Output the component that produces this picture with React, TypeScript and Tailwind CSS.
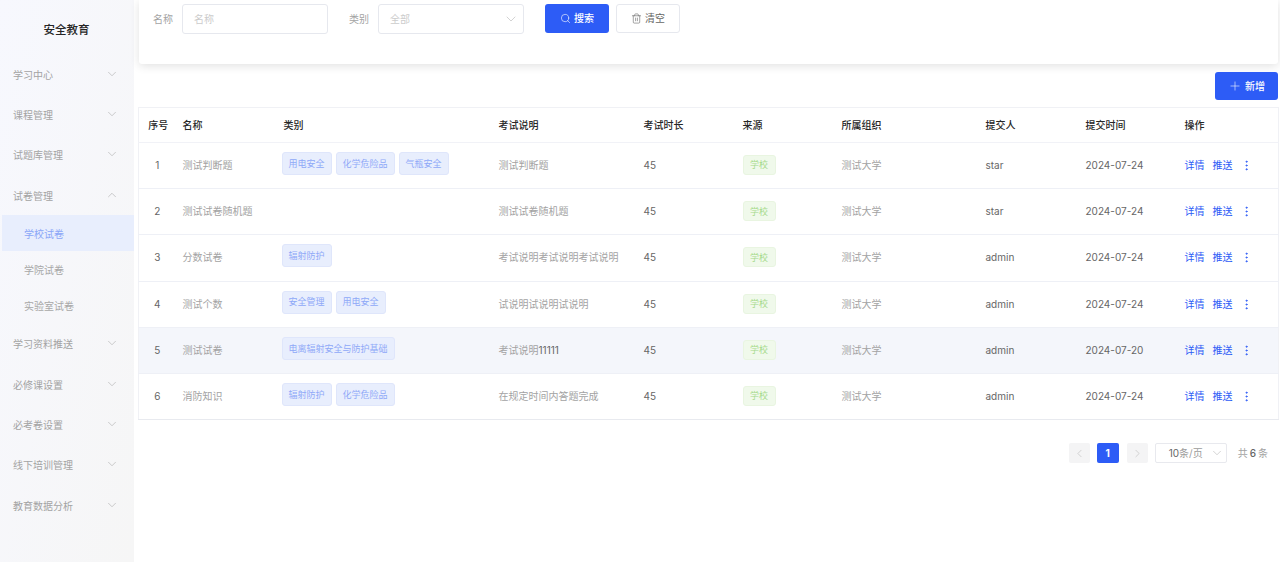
import { ChevronDown, ChevronUp, ChevronLeft, ChevronRight, Search, Trash2, Plus, EllipsisVertical } from "lucide-react";

const rows = [
  { id: 1, name: "测试判断题", tags: ["用电安全", "化学危险品", "气瓶安全"], desc: "测试判断题", user: "star", date: "2024-07-24" },
  { id: 2, name: "测试试卷随机题", tags: [], desc: "测试试卷随机题", user: "star", date: "2024-07-24" },
  { id: 3, name: "分数试卷", tags: ["辐射防护"], desc: "考试说明考试说明考试说明", user: "admin", date: "2024-07-24" },
  { id: 4, name: "测试个数", tags: ["安全管理", "用电安全"], desc: "试说明试说明试说明", user: "admin", date: "2024-07-24" },
  { id: 5, name: "测试试卷", tags: ["电离辐射安全与防护基础"], desc: "考试说明11111", user: "admin", date: "2024-07-20" },
  { id: 6, name: "消防知识", tags: ["辐射防护", "化学危险品"], desc: "在规定时间内答题完成", user: "admin", date: "2024-07-24" },
];

function MenuItem({ label, open }: { label: string; open?: boolean }) {
  return (
    <div className="flex h-[40.4px] items-center justify-between pl-[13px] pr-[15px] text-[#a3a3a3]">
      <span>{label}</span>
      {open ? <ChevronUp size={14} strokeWidth={1} className="mt-[-3px] text-[#a8a8a8]" /> : <ChevronDown size={14} strokeWidth={1} className="mt-[-3px] text-[#a8a8a8]" />}
    </div>
  );
}

function Sub({ label, active }: { label: string; active?: boolean }) {
  return (
    <div className={`ml-[2px] flex h-[36px] items-center pl-[22px] pt-[3px] ${active ? "bg-[#e8eefd] text-[#8ba6f8]" : "text-[#a8a8a8]"}`}>{label}</div>
  );
}

const th = "px-[7px] text-left font-medium text-[#262626]";
const td = "px-[7px] align-middle";

export default function App() {
  return (
    <div className="flex h-[562px] w-[1280px] overflow-hidden bg-white text-[10px] font-['Inter','Noto_Sans_CJK_SC',sans-serif]">
      <aside className="w-[134px] shrink-0 bg-gradient-to-br from-[#f7f8fe] to-[#f6f6f6]">
        <div className="flex h-[55px] items-center justify-center pr-[1px] pt-[7px] text-[11.5px] font-medium text-[#262626]">安全教育</div>
        <MenuItem label="学习中心" />
        <MenuItem label="课程管理" />
        <MenuItem label="试题库管理" />
        <MenuItem label="试卷管理" open />
        <div className="-mt-[1.6px] mb-[1.6px]">
          <Sub label="学校试卷" active />
          <Sub label="学院试卷" />
          <Sub label="实验室试卷" />
        </div>
        <MenuItem label="学习资料推送" />
        <MenuItem label="必修课设置" />
        <MenuItem label="必考卷设置" />
        <MenuItem label="线下培训管理" />
        <MenuItem label="教育数据分析" />
      </aside>
      <main className="ml-[5px] w-[1139px] shrink-0">
        <section className="flex h-[64px] items-start rounded-b-[3px] bg-white pt-[4px] shadow-[0_2px_10px_rgba(0,0,0,0.12)]">
          <span className="ml-[14px] flex h-[30px] w-[29px] items-center text-[#a3a3a3]">名称</span>
          <div className="flex h-[30px] w-[146px] items-center rounded-[3px] border border-[#e6e8ee] pl-[11px] text-[#cccccc]">名称</div>
          <span className="ml-[21px] flex h-[30px] w-[29px] items-center text-[#a3a3a3]">类别</span>
          <div className="flex h-[30px] w-[146px] items-center justify-between rounded-[3px] border border-[#e6e8ee] pl-[11px] pr-[4px] text-[#cccccc]">
            全部
            <ChevronDown size={16} strokeWidth={0.9} className="text-[#b5b5b5]" />
          </div>
          <button className="ml-[21px] flex h-[29px] w-[64px] items-center justify-center gap-[3px] rounded-[3px] bg-[#2d5cf6] font-medium text-white">
            <Search size={11} strokeWidth={1.3} />搜索
          </button>
          <button className="ml-[7px] flex h-[29px] w-[64px] items-center justify-center gap-[3px] rounded-[3px] border border-[#e6e8ee] text-[#666]">
            <Trash2 size={11} strokeWidth={1.3} />清空
          </button>
        </section>
        <div className="mt-[8px] flex justify-end">
          <button className="flex h-[28px] w-[63px] items-center justify-center gap-[3px] rounded-[3px] bg-[#2d5cf6] font-medium text-white">
            <Plus size={14} strokeWidth={1} />新增
          </button>
        </div>
        <table className="mt-[7px] -ml-[1px] w-[1140px] table-fixed border-collapse border border-[#f0f1f5]">
          <colgroup>
            <col className="w-[37px]" /><col className="w-[101px]" /><col className="w-[215px]" /><col className="w-[145px]" /><col className="w-[99px]" />
            <col className="w-[99px]" /><col className="w-[144px]" /><col className="w-[100px]" /><col className="w-[99px]" /><col className="w-[101px]" />
          </colgroup>
          <thead>
            <tr className="h-[35px] border-b border-[#f1f2f7]">
              <th className="pl-[8px] pr-[6px] text-center font-medium text-[#262626]">序号</th>
              <th className={th}>名称</th>
              <th className={th}>类别</th>
              <th className={th}>考试说明</th>
              <th className={th}>考试时长</th>
              <th className={th}>来源</th>
              <th className={th}>所属组织</th>
              <th className={th}>提交人</th>
              <th className={th}>提交时间</th>
              <th className={th}>操作</th>
            </tr>
          </thead>
          <tbody>
            {rows.map((r) => (
              <tr key={r.id} className={`h-[46.2px] border-b ${r.id === 6 ? "border-[#e8eaef]" : "border-[#eef0f6]"} ${r.id === 5 ? "bg-[#f4f6fb]" : ""}`}>
                <td className={`${td} text-center text-[#666]`}>{r.id}</td>
                <td className={`${td} text-[#a3a3a3]`}>{r.name}</td>
                <td className={td}>
                  <div className="mb-[4px] -ml-[2px] flex gap-[4px]">
                    {r.tags.map((t) => (
                      <span key={t} className="flex h-[23px] items-center rounded-[3px] border border-[#dfe6fb] bg-[#e8eefd] px-[6px] text-[9px] text-[#8fa9f8]">{t}</span>
                    ))}
                  </div>
                </td>
                <td className={`${td} text-[#a3a3a3]`}>
                  {r.id === 5 ? <>考试说明<span className="text-[#666]">11111</span></> : r.desc}
                </td>
                <td className={`${td} text-[#666]`}>45</td>
                <td className={td}>
                  <span className="mb-[1px] flex h-[20px] w-[33px] items-center justify-center rounded-[3px] border border-[#e9f5e1] bg-[#f0f9eb] text-[9px] text-[#a5d98a]">学校</span>
                </td>
                <td className={`${td} text-[#a3a3a3]`}>测试大学</td>
                <td className={`${td} text-[#666]`}>{r.user}</td>
                <td className={`${td} text-[#666]`}>{r.date}</td>
                <td className={td}>
                  <div className="flex items-center gap-[8px] text-[#2d5cf6]">
                    <span>详情</span><span>推送</span>
                    <EllipsisVertical size={13} strokeWidth={1.8} className="-ml-[1px]" />
                  </div>
                </td>
              </tr>
            ))}
          </tbody>
        </table>
        <div className="mt-[23px] flex items-center justify-end pr-[10px] text-[#777]">
          <span className="flex h-[20px] w-[21px] items-center justify-center rounded-[2px] bg-[#f4f4f5] text-[#b5b5b5]"><ChevronLeft size={13} strokeWidth={1} /></span>
          <span className="ml-[7px] flex h-[20px] w-[22px] items-center justify-center rounded-[2px] bg-[#2d5cf6] font-bold text-white">1</span>
          <span className="ml-[8px] flex h-[20px] w-[21px] items-center justify-center rounded-[2px] bg-[#f4f4f5] text-[#b5b5b5]"><ChevronRight size={13} strokeWidth={1} /></span>
          <div className="ml-[7px] flex h-[20px] w-[72px] items-center justify-between rounded-[2px] border border-[#e8e9ee] pl-[13px] pr-[2px]">
            <span className="text-[#9c9c9c]"><span className="text-[#666]">10</span>条/页</span>
            <ChevronDown size={14} strokeWidth={1} className="text-[#b5b5b5]" />
          </div>
          <span className="ml-[11px] flex text-[#a3a3a3]">共<span className="mx-[2px] font-medium text-[#666]">6</span>条</span>
        </div>
      </main>
    </div>
  );
}
